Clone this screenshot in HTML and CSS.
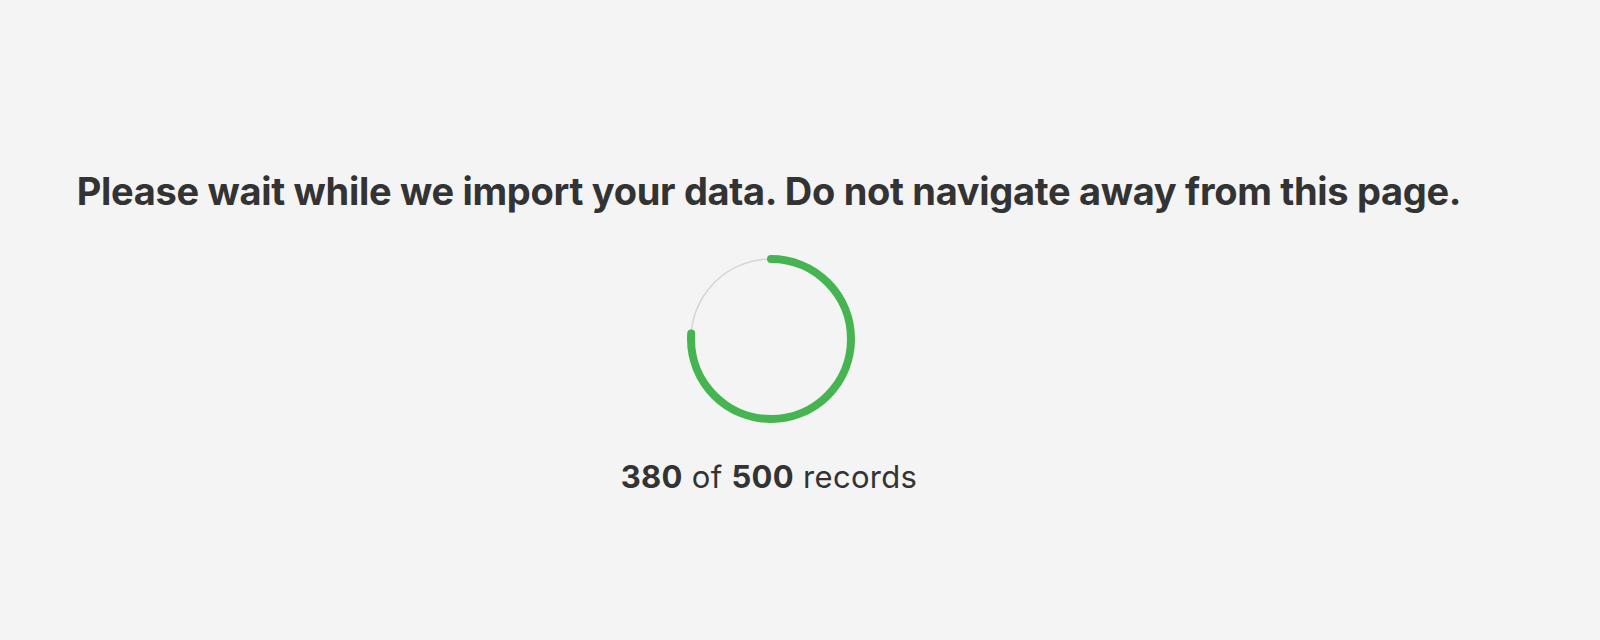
FILE: index.html
```html
<!DOCTYPE html>
<html lang="en">
<head>
    <meta charset="UTF-8">
    <meta name="viewport" content="width=device-width, initial-scale=1.0">
    <title>Importing data</title>
    <link rel="stylesheet" href="styles.css">
</head>
<body>
    <div class="import-wrap">
        <h1 class="import-title">Please wait while we import your data. Do not navigate away from this page.</h1>

        <div class="progress-ring">
            <svg width="176" height="176" viewBox="0 0 176 176">
                <circle class="ring-track" cx="88" cy="88" r="80"></circle>
                <!-- 380 / 500 = 76% of 502.65 -->
                <circle class="ring-bar" cx="88" cy="88" r="80" stroke-dasharray="382.01 502.65" transform="rotate(-90 88 88)"></circle>
            </svg>
        </div>

        <p class="import-count"><strong>380</strong> of <strong>500</strong> records</p>
    </div>
</body>
</html>
```

FILE: styles.css
```css
html, body {
    margin: 0;
    padding: 0;
    background-color: #f4f4f4;
}
body {
    font-family: Inter, "Noto Sans", Arial, sans-serif;
    color: #333333;
}
.import-wrap {
    width: 1538px;
    padding-top: 168px;
    display: flex;
    flex-direction: column;
    align-items: center;
}
.import-title {
    margin: 0;
    font-size: 38px;
    font-weight: 700;
    letter-spacing: -0.3px;
    text-align: center;
}
.progress-ring {
    margin: 37px 0 0 4px;
}
.progress-ring svg {
    display: block;
}
.ring-track {
    fill: none;
    stroke: #d4d4d4;
    stroke-width: 1.5;
}
.ring-bar {
    fill: none;
    stroke: #46b450;
    stroke-width: 8;
    stroke-linecap: round;
}
.import-count {
    margin: 31px 0 0;
    font-size: 31px;
    font-weight: 400;
    letter-spacing: 0.3px;
}
.import-count strong {
    font-weight: 700;
}
```
